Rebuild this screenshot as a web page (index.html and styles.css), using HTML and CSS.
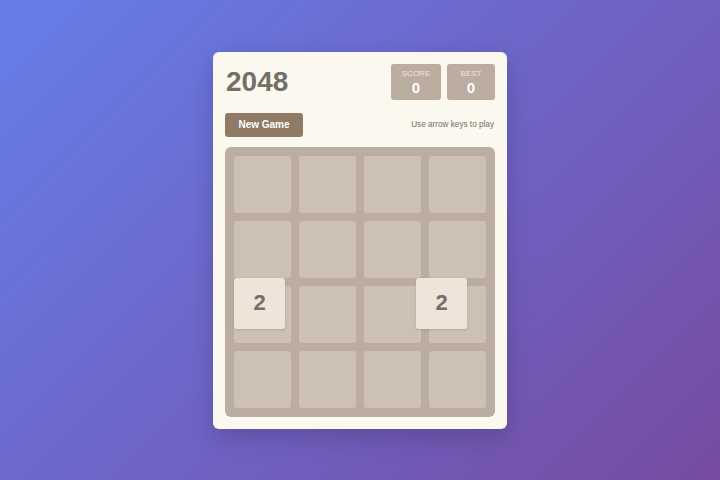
FILE: index.html
```html
<!DOCTYPE html>
<html lang="en">
<head>
<meta charset="utf-8">
<title>2048</title>
<link rel="stylesheet" href="styles.css">
</head>
<body>
<div class="card">
  <div class="header">
    <h1 class="title">2048</h1>
    <div class="scores">
      <div class="score-box score"><div class="label">SCORE</div><div class="value">0</div></div>
      <div class="score-box best"><div class="label">BEST</div><div class="value">0</div></div>
    </div>
  </div>
  <div class="controls">
    <button class="new-game">New Game</button>
    <span class="hint">Use arrow keys to play</span>
  </div>
  <div class="board">
    <div class="grid">
      <div class="cell"></div><div class="cell"></div><div class="cell"></div><div class="cell"></div>
      <div class="cell"></div><div class="cell"></div><div class="cell"></div><div class="cell"></div>
      <div class="cell"></div><div class="cell"></div><div class="cell"></div><div class="cell"></div>
      <div class="cell"></div><div class="cell"></div><div class="cell"></div><div class="cell"></div>
    </div>
    <div class="tile tile-a">2</div>
    <div class="tile tile-b">2</div>
  </div>
</div>
</body>
</html>
```

FILE: styles.css
```css
html, body {
  margin: 0;
  padding: 0;
  height: 100%;
}
body {
  font-family: "Liberation Sans", Arial, sans-serif;
  background: linear-gradient(135deg, #667eea 0%, #764ba2 100%);
  display: flex;
  align-items: center;
  justify-content: center;
  min-height: 480px;
}
.card {
  width: 270px;
  padding: 12px;
  background: #faf8ef;
  border-radius: 6px;
  box-shadow: 0 8px 24px rgba(0, 0, 0, 0.18);
}
.header {
  display: flex;
  justify-content: space-between;
  align-items: center;
  height: 36px;
}
.title {
  margin: 0;
  font-size: 28px;
  font-weight: bold;
  color: #776e65;
  line-height: 1;
  padding-left: 1px;
}
.scores {
  display: flex;
  gap: 6px;
}
.score-box {
  background: #bbada0;
  border-radius: 3px;
  height: 36px;
  display: flex;
  flex-direction: column;
  align-items: center;
  justify-content: center;
  box-sizing: border-box;
  padding-top: 1px;
}
.score { width: 50px; }
.best { width: 48px; }
.label {
  font-size: 8px;
  color: #eee4da;
  line-height: 10px;
}
.value {
  font-size: 15px;
  font-weight: bold;
  color: #ffffff;
  line-height: 17px;
}
.controls {
  display: flex;
  justify-content: space-between;
  align-items: center;
  margin-top: 13px;
}
.new-game {
  width: 78px;
  height: 24px;
  border: none;
  border-radius: 3px;
  background: #8f7a66;
  color: #ffffff;
  font-family: "Liberation Sans", Arial, sans-serif;
  font-weight: bold;
  font-size: 10px;
  padding: 0;
}
.hint {
  font-size: 8.2px;
  color: #776e65;
  padding-right: 1px;
}
.board {
  position: relative;
  margin-top: 10px;
  background: #bbada0;
  border-radius: 6px;
  padding: 9px;
}
.grid {
  display: grid;
  grid-template-columns: repeat(4, 57px);
  grid-auto-rows: 57px;
  gap: 8px;
}
.cell {
  background: #cdc1b4;
  border-radius: 3px;
}
.tile {
  position: absolute;
  width: 51px;
  height: 51px;
  background: #eee4da;
  border-radius: 3px;
  color: #776e65;
  font-size: 22px;
  font-weight: bold;
  display: flex;
  align-items: center;
  justify-content: center;
  box-shadow: 0 1px 3px rgba(0, 0, 0, 0.12);
}
.tile-a { left: 9px; top: 131px; }
.tile-b { left: 191px; top: 131px; }
```
